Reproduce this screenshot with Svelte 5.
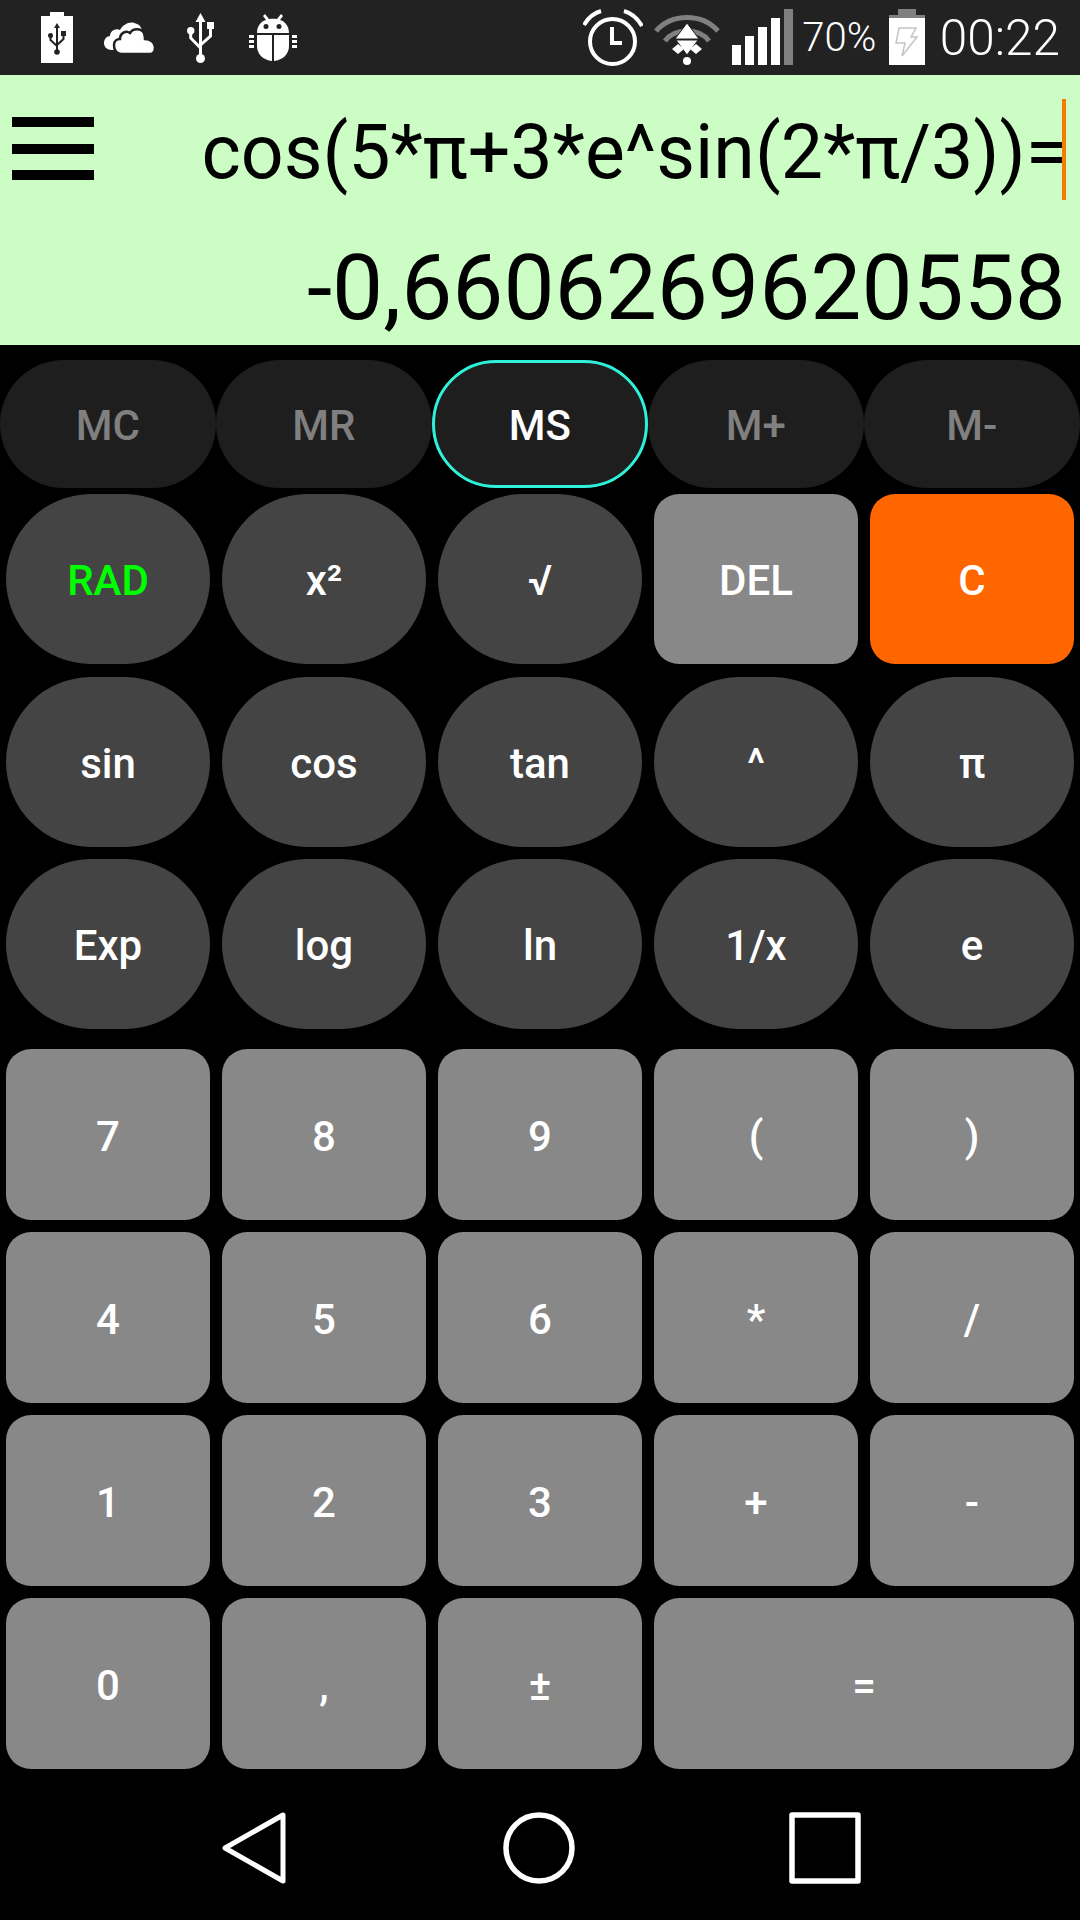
<script>
	const memory = ["MC", "MR", "MS", "M+", "M-"];
	const memoryActive = "MS";

	const science = [
		{ label: "RAD", kind: "round rad" },
		{ label: "x²", kind: "round" },
		{ label: "√", kind: "round" },
		{ label: "DEL", kind: "square" },
		{ label: "C", kind: "square clear" },
		{ label: "sin", kind: "round" },
		{ label: "cos", kind: "round" },
		{ label: "tan", kind: "round" },
		{ label: "^", kind: "round" },
		{ label: "π", kind: "round" },
		{ label: "Exp", kind: "round" },
		{ label: "log", kind: "round" },
		{ label: "ln", kind: "round" },
		{ label: "1/x", kind: "round" },
		{ label: "e", kind: "round" }
	];

	const numbers = ["7", "8", "9", "(", ")", "4", "5", "6", "*", "/", "1", "2", "3", "+", "-", "0", ",", "±"];
</script>

<div class="Phone">
	<header class="Status">
		<div class="Status-group Status-left">
			<svg width="32" height="75" viewBox="0 0 32 75">
				<path fill="#fff" d="M9 12h14v4h9v47H0V16h9z" />
				<g fill="none" stroke="#222" stroke-width="2">
					<path d="M16 27v25M9.500 36v4l6.500 6M22.500 34v5l-6.500 6" />
				</g>
				<path fill="#222" d="M16 23l3 5h-6z" />
				<circle fill="#222" cx="16" cy="52" r="2.800" />
				<circle fill="#222" cx="9.500" cy="35.500" r="2.500" />
				<rect fill="#222" x="20" y="31" width="5" height="5" />
			</svg>
			<svg class="gap-cloud" width="50" height="75" viewBox="0 0 50 75">
				<path fill="#fff" d="M8 50C3 50 0 47 0 43c0-4 3-7 6-7 0-5 6-8 10-6 3-6 11-10 17-6 3 1 5 4 5 8v12L20 50z" />
				<path fill="#fff" stroke="#222" stroke-width="2.500" d="M17 54c-5 0-7-5-7-9 0-4 3-6 6-6 0-6 6-9 10-6 3-5 11-5 14 0 1 3 1 5 1 6 5 0 10 3 10 8 0 4-2 7-5 7z" />
			</svg>
			<svg class="gap-usb" width="28" height="75" viewBox="0 0 28 75">
				<g fill="none" stroke="#fff" stroke-width="3">
					<path d="M13.500 20v36M3.700 32v6l9.800 10M23.500 28v8l-10 9" />
				</g>
				<path fill="#fff" d="M13.500 13l5 9h-10z" />
				<circle fill="#fff" cx="13.500" cy="58.500" r="4.500" />
				<circle fill="#fff" cx="3.700" cy="30.700" r="3.700" />
				<rect fill="#fff" x="20" y="22" width="7" height="7" />
			</svg>
			<svg class="gap-bug" width="48" height="75" viewBox="0 0 48 75">
				<path fill="#fff" d="M8 33c0-8 5-12 9-13l-3-4 2-2 4 5c2-.5 6-.5 8 0l4-5 2 2-3 4c4 1 9 5 9 13z" />
				<circle fill="#222" cx="17" cy="26.500" r="2.500" />
				<circle fill="#222" cx="30" cy="26.500" r="2.500" />
				<path fill="#fff" d="M8 35h15v26C14 60 8 54 8 46zM25 35h15v11c0 8-6 14-15 15z" />
				<path fill="#fff" d="M0 35h5v3H0zM0 40h5v3H0zM0 45h5v3H0zM43 35h5v3h-5zM43 40h5v3h-5zM43 45h5v3h-5z" />
			</svg>
		</div>

		<div class="Status-group Status-right">
			<svg width="60" height="75" viewBox="0 0 60 75">
				<circle fill="none" stroke="#fff" stroke-width="4" cx="29.500" cy="41.500" r="22.500" />
				<path fill="none" stroke="#fff" stroke-width="4" d="M29 27v16h10M1 25C5 18 11 13 18 11M41 11c7 2 14 8 18 15" />
			</svg>
			<svg class="gap-wifi" width="66" height="75" viewBox="0 0 66 75">
				<path fill="none" stroke="#808080" stroke-width="5" d="M2 31C18 13 48 13 64 31M11 41c5-7 13-10 22-10s17 3 22 10" />
				<path fill="#fff" stroke="#222" stroke-width="1" d="M33 23l12 16H21zM22 40h22L33 55z" />
				<path fill="#fff" d="M24 44l6 5-6 5-6-5zM42 44l6 5-6 5-6-5z" />
				<circle fill="#fff" cx="33" cy="61" r="4" />
			</svg>
			<svg class="gap-signal" width="61" height="75" viewBox="0 0 61 75">
				<path fill="#fff" d="M0 45h9v20H0zM13 36h9v29h-9zM26 27h9v38h-9zM39 18h9v47h-9z" />
				<path fill="#808080" d="M52 9h9v56h-9z" />
			</svg>
			<span class="Status-level">70%</span>
			<svg class="gap-battery" width="36" height="75" viewBox="0 0 36 75">
				<path fill="#fff" d="M0 18h36v47H0z" />
				<path fill="#808080" d="M9 9h18v6h9v3H0v-3h9z" />
				<path fill="none" stroke="#c4c4c4" stroke-width="1.500" d="M10 28h17l-5 9h6L13 56l3-13H7z" />
			</svg>
			<span class="Status-time">00:22</span>
		</div>
	</header>

	<section class="Display">
		<div class="Display-top">
			<div class="Menu">
				<span></span>
				<span></span>
				<span></span>
			</div>
			<div class="Expression">cos(5*π+3*e^sin(2*π/3))=<i class="Cursor"></i></div>
		</div>
		<div class="Result">-0,6606269620558</div>
	</section>

	<nav class="Memory">
		{#each memory as label}
			<button class="Memory-key" class:is-active={label === memoryActive}>{label}</button>
		{/each}
	</nav>

	<div class="Keys Keys-science">
		{#each science as key}
			<button class="Key {key.kind}">{key.label}</button>
		{/each}
	</div>

	<div class="Keys Keys-numbers">
		{#each numbers as label}
			<button class="Key square">{label}</button>
		{/each}
		<button class="Key square wide">=</button>
	</div>

	<footer class="Nav">
		<svg width="64" height="72" viewBox="0 0 64 72">
			<path fill="none" stroke="#fff" stroke-width="5" stroke-linejoin="round" d="M61 3v66L3 36z" />
		</svg>
		<svg width="72" height="72" viewBox="0 0 72 72">
			<circle fill="none" stroke="#fff" stroke-width="5.500" cx="36" cy="36" r="33" />
		</svg>
		<svg width="72" height="72" viewBox="0 0 72 72">
			<rect fill="none" stroke="#fff" stroke-width="5.500" stroke-linejoin="round" x="3" y="3" width="66" height="66" />
		</svg>
	</footer>
</div>

<style>
	:global(body) {
		background: #000;
	}

	.Phone {
		display: flex;
		flex-direction: column;
		width: 1080px;
		height: 1920px;
		overflow: hidden;
		background: #000;
		font-family: Roboto, "Liberation Sans", sans-serif;
	}

	.Status {
		display: flex;
		justify-content: space-between;
		flex: none;
		padding: 0 20px 0 41px;
		height: 75px;
		background: #222;
		color: #fff;
	}

	.Status-group {
		display: flex;
		align-items: center;
	}

	.gap-cloud {
		margin-left: 31px;
	}

	.gap-usb {
		margin-left: 33px;
	}

	.gap-bug {
		margin-left: 34px;
	}

	.gap-wifi {
		margin-left: 11px;
	}

	.gap-signal {
		margin-left: 12px;
	}

	.gap-battery {
		margin-left: 13px;
	}

	.Status-level {
		margin-left: 9px;
		font-size: 40px;
		font-weight: 300;
	}

	.Status-time {
		margin-left: 14.5px;
		font-size: 49.500px;
		font-weight: 300;
	}

	.Display {
		flex: none;
		height: 270px;
		box-sizing: border-box;
		padding: 24px 14px 0 12px;
		background: #ccfdc5;
		color: #000;
	}

	.Display-top {
		display: flex;
		justify-content: space-between;
		height: 101px;
	}

	.Menu {
		display: flex;
		flex-direction: column;
		gap: 16.5px;
		width: 82px;
		padding-top: 18px;
	}

	.Menu span {
		height: 10px;
		background: #000;
	}

	.Expression {
		position: relative;
		margin-right: -1px;
		font-size: 75.2px;
		line-height: 107px;
		white-space: nowrap;
	}

	.Cursor {
		position: absolute;
		top: 0;
		right: 1px;
		width: 4px;
		height: 101px;
		background: #f57c00;
	}

	.Result {
		margin-top: 35px;
		font-size: 91px;
		line-height: 106px;
		text-align: right;
		white-space: nowrap;
	}

	.Memory {
		display: grid;
		grid-template-columns: repeat(5, 1fr);
		flex: none;
		margin-top: 15px;
		height: 128px;
	}

	button {
		margin: 0;
		padding: 3px 0 0;
		border: 0;
		font-family: inherit;
		font-size: 42px;
		font-weight: 500;
		color: #fff;
	}

	.Memory-key {
		margin: 0 0.5px 0 0;
		border-radius: 64px;
		background: #1e1e1e;
		color: #808080;
	}

	.Memory-key.is-active {
		border: 3px solid #2ff0d8;
		color: #fff;
	}

	.Keys {
		display: grid;
		grid-template-columns: repeat(5, 204px);
		column-gap: 12px;
		flex: none;
		padding: 0 6px;
	}

	.Keys-science {
		grid-auto-rows: 170px;
		row-gap: 12.5px;
		margin-top: 6px;
	}

	.Keys-numbers {
		grid-auto-rows: 171px;
		row-gap: 12px;
		margin-top: 20px;
	}

	.Key.round {
		border-radius: 85px;
		background: #444;
	}

	.Key.square {
		border-radius: 25px;
		background: #888;
	}

	.Key.rad {
		color: #0f0;
	}

	.Key.clear {
		background: #f60;
	}

	.Key.wide {
		grid-column: span 2;
	}

	.Nav {
		display: flex;
		flex: none;
		align-items: center;
		margin-top: 43px;
		padding-left: 222px;
	}

	.Nav svg:nth-child(2) {
		margin-left: 217px;
	}

	.Nav svg:nth-child(3) {
		margin-left: 214px;
	}
</style>
